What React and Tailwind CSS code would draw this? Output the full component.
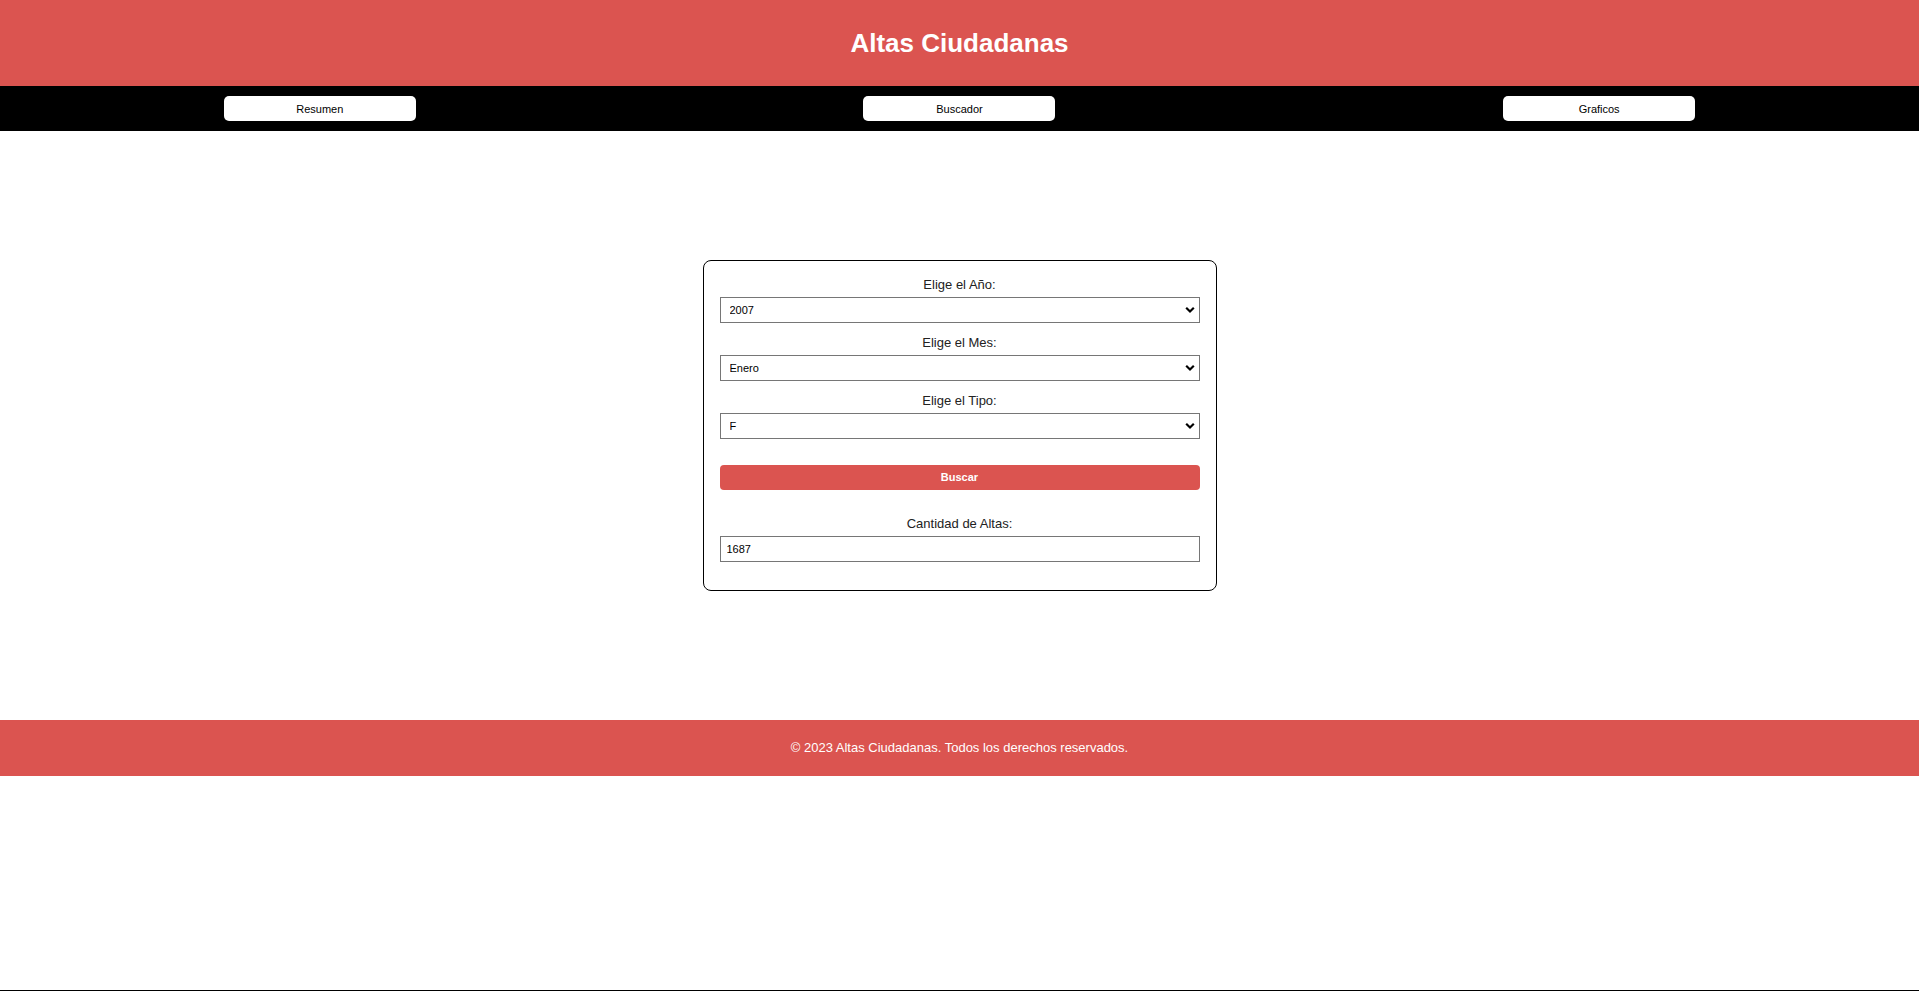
import { useState } from 'react'

const navItems = ['Resumen', 'Buscador', 'Graficos']

function Chevron() {
  return (
    <svg
      className="pointer-events-none absolute right-[5px] top-1/2 -translate-y-1/2"
      width="10"
      height="7"
      viewBox="0 0 10 7"
      fill="none"
    >
      <path d="M1.2 1.3 L5 5 L8.8 1.3" stroke="#000" strokeWidth="2.2" strokeLinejoin="miter" />
    </svg>
  )
}

function SelectField({ label, value, options, onChange }) {
  return (
    <div className="mb-[11px]">
      <label className="mb-[3px] block text-center text-[13px] leading-[18px] text-[#222]">{label}</label>
      <div className="relative">
        <select
          value={value}
          onChange={(e) => onChange(e.target.value)}
          className="block h-[26px] w-full appearance-none rounded-none border border-[#767676] bg-white pl-[9px] text-[11px] text-black outline-none"
        >
          {options.map((o) => (
            <option key={o} value={o}>
              {o}
            </option>
          ))}
        </select>
        <Chevron />
      </div>
    </div>
  )
}

export default function App() {
  const [year, setYear] = useState('2007')
  const [month, setMonth] = useState('Enero')
  const [type, setType] = useState('F')

  return (
    <div className="flex h-[991px] flex-col border-b border-black bg-white font-['Liberation_Sans',Arial,sans-serif]">
      <header className="flex h-[86px] items-center justify-center bg-[#db5450]">
        <h1 className="text-[26px] font-bold leading-none text-white">Altas Ciudadanas</h1>
      </header>

      <nav className="flex h-[45px] items-center justify-around bg-black">
        {navItems.map((item) => (
          <button
            key={item}
            className="h-[25px] w-[192px] rounded-[5px] bg-white pt-px text-[11px] text-black"
          >
            {item}
          </button>
        ))}
      </nav>

      <main className="flex h-[589px] items-center justify-center">
        <div className="w-[514px] rounded-[8px] border border-black px-4 pb-[28px] pt-[15px]">
          <SelectField
            label="Elige el Año:"
            value={year}
            onChange={setYear}
            options={['2007', '2008', '2009', '2010', '2011', '2012']}
          />
          <SelectField
            label="Elige el Mes:"
            value={month}
            onChange={setMonth}
            options={['Enero', 'Febrero', 'Marzo', 'Abril', 'Mayo', 'Junio']}
          />
          <SelectField label="Elige el Tipo:" value={type} onChange={setType} options={['F', 'M']} />

          <button className="mt-[26px] block h-[25px] w-full rounded-[4px] bg-[#db5450] text-[11px] font-bold text-white">
            Buscar
          </button>

          <label className="mb-[3px] mt-[25px] block text-center text-[13px] leading-[18px] text-[#222]">
            Cantidad de Altas:
          </label>
          <input
            readOnly
            value="1687"
            className="block h-[26px] w-full border border-[#767676] bg-white pl-[6px] text-[11px] text-black outline-none"
          />
        </div>
      </main>

      <footer className="flex h-[56px] items-center justify-center bg-[#db5450]">
        <p className="text-[13px] text-white">© 2023 Altas Ciudadanas. Todos los derechos reservados.</p>
      </footer>

      <div className="flex-1" />
    </div>
  )
}
